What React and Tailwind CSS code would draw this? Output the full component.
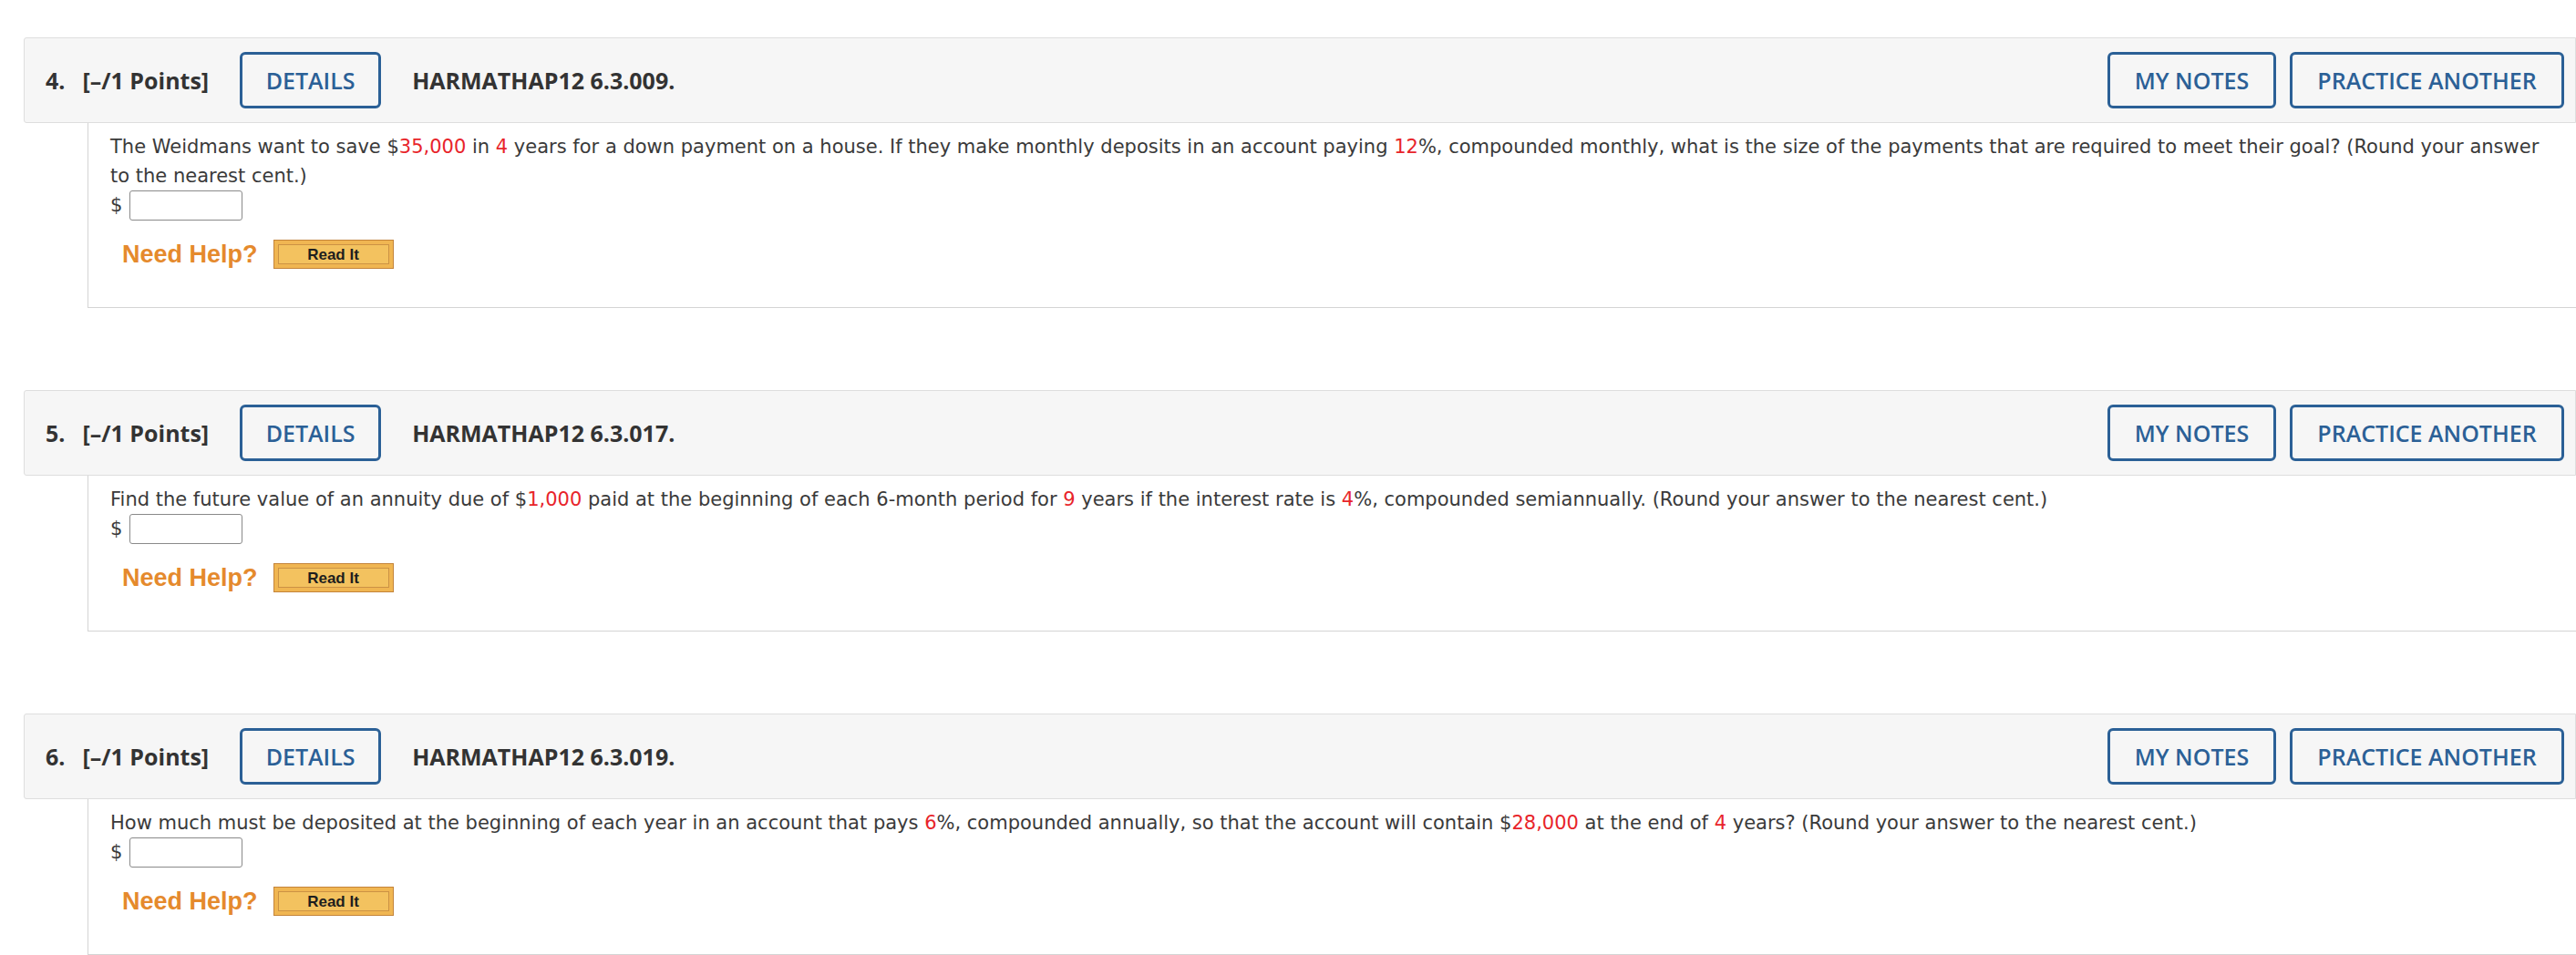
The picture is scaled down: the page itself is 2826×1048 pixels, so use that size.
import React from "react";

const R = ({ children }) => <span className="text-[#e8242a]">{children}</span>;

const questions = [
  {
    num: "4.",
    code: "HARMATHAP12 6.3.009.",
    text: (
      <>
        The Weidmans want to save $<R>35,000</R> in <R>4</R> years for a down payment on a house. If they make monthly deposits in an account paying <R>12</R>%, compounded monthly, what is the size of the payments that are required to meet their goal? (Round your answer to the nearest cent.)
      </>
    ),
  },
  {
    num: "5.",
    code: "HARMATHAP12 6.3.017.",
    text: (
      <>
        Find the future value of an annuity due of $<R>1,000</R> paid at the beginning of each 6-month period for <R>9</R> years if the interest rate is <R>4</R>%, compounded semiannually. (Round your answer to the nearest cent.)
      </>
    ),
  },
  {
    num: "6.",
    code: "HARMATHAP12 6.3.019.",
    text: (
      <>
        How much must be deposited at the beginning of each year in an account that pays <R>6</R>%, compounded annually, so that the account will contain $<R>28,000</R> at the end of <R>4</R> years? (Round your answer to the nearest cent.)
      </>
    ),
  },
];

function OutlineButton({ children, className = "" }) {
  return (
    <div
      className={
        "h-[62px] shrink-0 rounded-[6px] border-[3px] border-[#2b6096] text-[25px] leading-none font-semibold text-[#2b6096] flex items-center justify-center cursor-pointer " +
        className
      }
    >
      {children}
    </div>
  );
}

function Question({ q }) {
  return (
    <div className="flex flex-col">
      <div className="h-[94px] flex items-center justify-between border border-[#dedede] rounded-l-[3px] bg-[#f6f6f6] pl-[23px] pr-[12px] font-['Open_Sans',sans-serif] text-[#333333]">
        <div className="flex items-center">
          <span className="text-[25px] leading-none font-bold">{q.num}</span>
          <span className="ml-[19px] text-[25px] leading-none font-bold">[–/1 Points]</span>
          <OutlineButton className="ml-[34px] w-[155px]">DETAILS</OutlineButton>
          <span className="ml-[34px] text-[25px] leading-none font-bold">{q.code}</span>
        </div>
        <div className="flex items-center gap-[15px]">
          <OutlineButton className="w-[185px]">MY NOTES</OutlineButton>
          <OutlineButton className="w-[301px]">PRACTICE ANOTHER</OutlineButton>
        </div>
      </div>
      <div className="ml-[70px] border-l border-b border-[#d4d4d4] pl-[24px] pr-[30px] pt-[10px] pb-[42px] font-['DejaVu_Sans',Verdana,sans-serif] text-[#3a3a3a]">
        <p className="text-[21px] leading-[32px]">{q.text}</p>
        <div className="flex items-center h-[33px] text-[21px]">
          <span>$</span>
          <span className="ml-[8px] block w-[124px] h-[33px] rounded-[3px] border border-[#8a8a8a] bg-white"></span>
        </div>
        <div className="mt-[21px] ml-[13px] flex items-center gap-[17px]">
          <span className="font-['Liberation_Sans',Arial,sans-serif] font-bold text-[27px] text-[#e58a2d] leading-none">
            Need Help?
          </span>
          <span className="h-[32px] w-[132px] border border-[#c4843a] bg-[#f0b652] p-[4px] flex">
            <span className="flex-1 border border-[#cc9244] bg-[#f3c25f] flex items-center justify-center font-['Liberation_Sans',Arial,sans-serif] font-bold text-[17px] text-[#1e1e1e] leading-none">
              Read It
            </span>
          </span>
        </div>
      </div>
    </div>
  );
}

export default function App() {
  return (
    <div className="min-h-screen w-full bg-white pt-[41px] pl-[26px]">
      <div className="flex flex-col gap-[90px]">
        {questions.map((q) => (
          <Question key={q.num} q={q} />
        ))}
      </div>
    </div>
  );
}
